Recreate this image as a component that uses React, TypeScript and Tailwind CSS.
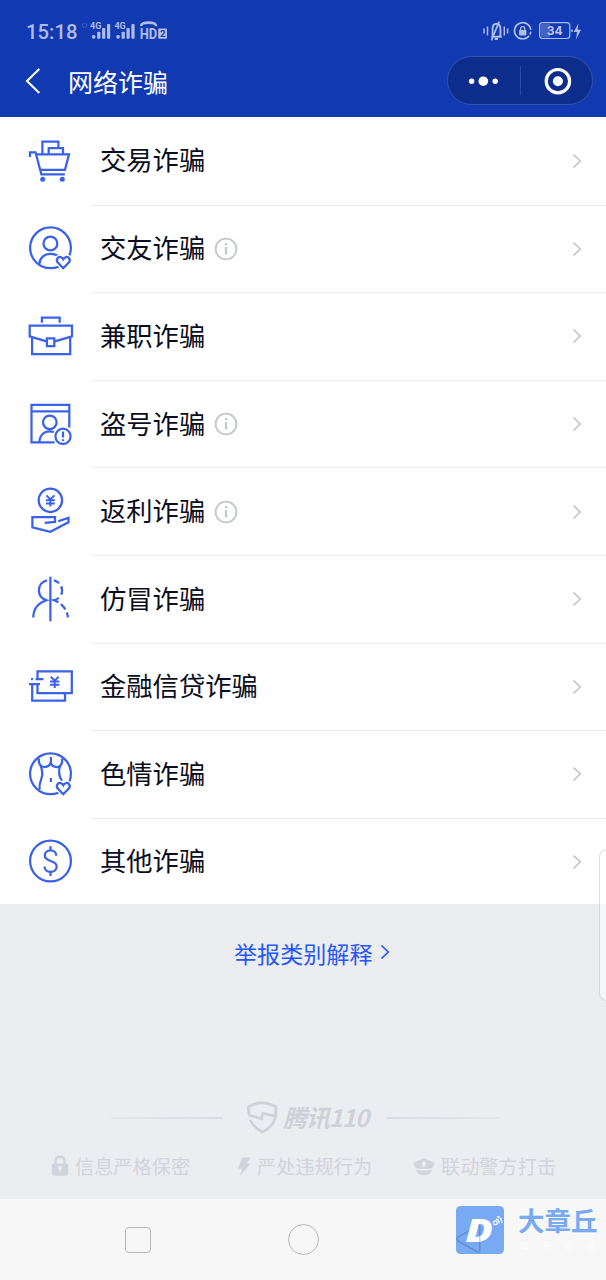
import React from "react";

const HEART =
  "M37.3 44.2l-5.5-5.6a3.6 3.6 0 0 1 0-4.7c1.7-1.6 4.1-1.1 5.5 1.3c1.4-2.4 3.8-2.9 5.5-1.3a3.6 3.6 0 0 1 0 4.7z";

function Heart() {
  return (
    <>
      <path d={HEART} fill="#fff" stroke="#fff" strokeWidth="5" />
      <path d={HEART} />
    </>
  );
}

function CartIcon() {
  return (
    <>
      <path d="M4 20V15.3H9.5L15.4 37.4H38.8" />
      <path d="M10 17.4H43L39 32.8H14.3" />
      <path d="M16.4 17V4.7H32.4V11" />
      <path d="M22.7 17V11.2H37V17" />
      <circle cx="16.7" cy="42.3" r="2.5" fill="#3a62e8" stroke="none" />
      <circle cx="36.3" cy="42.3" r="2.5" fill="#3a62e8" stroke="none" />
    </>
  );
}

function FriendIcon() {
  return (
    <>
      <circle cx="24.5" cy="23.8" r="20.4" />
      <circle cx="24.4" cy="19.5" r="6.9" />
      <path d="M13.3 40.2C13.6 33.6 18.5 29.9 24.4 29.9C27.4 29.9 30 30.5 32.2 32" />
      <Heart />
    </>
  );
}

function BriefcaseIcon() {
  return (
    <>
      <path d="M15.9 10.8V5.6H33.7V10.8" />
      <path d="M20.5 29.3L3.7 24.3V13.5H46V24.3L28.8 29.3" />
      <path d="M6.1 25V42H44.2V25" />
      <path d="M20.9 26.3H28.3V34.2H20.9Z" />
    </>
  );
}

function AccountIcon() {
  return (
    <>
      <path d="M43.3 27.5V4.8H5.5V42.4H28.5" />
      <path d="M5.5 11.4H43.3" />
      <circle cx="23.8" cy="22.3" r="6.8" />
      <path d="M13.4 42C13.7 35.5 17.8 31.4 23.8 31.4C25.4 31.4 26.6 31.6 27.8 32.2" />
      <circle cx="37" cy="36.3" r="7.6" />
      <path d="M37 31.6V37.4M37 39.2V41" />
    </>
  );
}

function RebateIcon() {
  return (
    <>
      <circle cx="24.4" cy="13.3" r="11.7" />
      <path d="M20.4 8.4L24.4 12.4L28.4 8.4M24.4 12.4V19.6M20 13.2H28.8M20 16.4H28.8" strokeWidth="2" />
      <path d="M18.7 35.9L29 34.9V30.2H6.4V40.3L24.3 44.8L42.5 35.2V30.9L32.2 34.3" />
    </>
  );
}

function FakeIcon() {
  return (
    <>
      <path d="M24.4 1.7V46.3" />
      <path d="M21 5.3C16 6.5 12.9 10.5 12.9 15.4C12.9 19.6 15.6 23.6 20.6 25.2C12.5 27.8 7.3 34 7.3 42.5" />
      <path d="M27.8 5.3C30 5.8 31.8 6.9 33.2 8.3M35.2 11.2C36.4 14 36.4 17 35.2 19.6M32.8 22.7C31.3 24.1 29.8 24.9 28.2 25.2C29.5 25.7 31 26.4 32.4 27.3M34.8 29.1C36.7 30.7 38.2 32.4 39.4 34.3M40.8 37.4C41.5 39.2 41.8 40.8 41.8 42.5" />
    </>
  );
}

function LoanIcon() {
  return (
    <>
      <path d="M11.5 17V9.3H45.8V31.2H11.5V22.4" />
      <path d="M6.2 22V38.6H39V31.4" />
      <path d="M3 22H14M9.6 17.1H17.4M5 17.1H7" />
      <path d="M24.8 14.8L28.7 18.7L32.6 14.8M28.7 18.7V26M24 19.5H33.4M24 22.8H33.4" strokeWidth="2" />
    </>
  );
}

function PornIcon() {
  return (
    <>
      <circle cx="24.5" cy="23.8" r="20.4" />
      <path d="M13 8.6C12.2 13.4 14.6 17 18.5 17C21.5 17 24 15.2 24.6 12.3C25.3 15.2 28 17 30.8 17C34.6 17 36.8 13.4 36 8.6" />
      <path d="M24.9 7V13.4" />
      <path d="M14.5 15.4C16.6 20.5 17.3 24 15.2 29.2C13.7 33 13.2 36 13.5 39.8" />
      <path d="M34.2 15.4C32.2 21 32.4 25.4 36 31" />
      <path d="M24.9 28V32" />
      <Heart />
    </>
  );
}

function OtherIcon() {
  return (
    <>
      <circle cx="24.5" cy="24" r="20.4" />
      <path d="M30.3 18.8C30.3 15.6 27.8 13.4 24.5 13.4C21.1 13.4 18.8 15.6 18.8 18.5C18.8 25.6 30.7 22.3 30.7 29.6C30.7 32.7 28 34.9 24.5 34.9C21 34.9 18.5 32.7 18.5 29.4" />
      <path d="M24.5 9.3V13.4M24.5 34.9V39" />
    </>
  );
}

const items = [
  { label: "交易诈骗", Icon: CartIcon },
  { label: "交友诈骗", Icon: FriendIcon, info: true },
  { label: "兼职诈骗", Icon: BriefcaseIcon },
  { label: "盗号诈骗", Icon: AccountIcon, info: true },
  { label: "返利诈骗", Icon: RebateIcon, info: true },
  { label: "仿冒诈骗", Icon: FakeIcon },
  { label: "金融信贷诈骗", Icon: LoanIcon },
  { label: "色情诈骗", Icon: PornIcon },
  { label: "其他诈骗", Icon: OtherIcon },
];

function SignalIcons() {
  return (
    <svg width="90" height="26" viewBox="0 0 90 26" fill="#b0bde8" className="shrink-0">
      <path d="M3.6 5L2.2 7.3L3.6 9.6M5.6 5L7 7.3L5.6 9.6" fill="none" stroke="#4c69c6" />
      {[0, 24.4].map((dx) => (
        <g key={dx} transform={`translate(${dx} 0)`}>
          <text x="10" y="11.2" className="font-['Roboto'] text-[9px] font-bold">
            4G
          </text>
          <rect x="12" y="16.9" width="3.3" height="3.8" rx="1.4" />
          <rect x="17.2" y="13.8" width="3.2" height="6.9" rx="0.8" />
          <rect x="22.1" y="10" width="3.2" height="10.7" rx="0.8" />
          <rect x="27" y="6" width="3.2" height="14.7" rx="0.8" />
        </g>
      ))}
      <path d="M61.3 8.2C61 5.6 64 4.6 68.6 4.6S76.2 5.6 75.9 8.2" fill="none" stroke="#b0bde8" strokeWidth="2.6" />
      <text x="59.7" y="20.8" textLength="17.5" lengthAdjust="spacingAndGlyphs" className="font-['Roboto'] text-[14.5px] font-bold">
        HD
      </text>
      <rect x="78.2" y="10.6" width="8.8" height="10.2" rx="1" />
      <text x="80" y="19.2" fill="#1139b2" className="font-['Roboto'] text-[9.5px] font-bold">
        2
      </text>
    </svg>
  );
}

function BatteryIcons() {
  return (
    <svg width="106" height="28" viewBox="0 0 106 28" fill="none" stroke="#b0bde8" className="shrink-0">
      <path d="M4 10.6V15.4M7.5 8.6V17.4M24.3 8.6V17.4M27.6 10.6V15.4" strokeWidth="1.5" />
      <path d="M11.2 18.8H21.8M12.6 18.2V11C12.6 7.6 14 5.7 16.4 5.7S20.4 7.6 20.4 11V18.2M14.6 21H18" strokeWidth="1.9" />
      <path d="M11.4 22.4L19.2 3.6" strokeWidth="1.7" />
      <path d="M49.2 17.8A8.2 8.2 0 1 1 50.8 11.8" strokeWidth="1.6" />
      <path d="M50.9 13.8L50 16.4" strokeWidth="1.6" />
      <rect x="39" y="12" width="7.4" height="5.4" rx="0.8" fill="#b0bde8" stroke="none" />
      <path d="M40.6 12V10.8A2.1 2.1 0 0 1 44.8 10.8V12" strokeWidth="1.3" />
      <rect x="59.6" y="4.7" width="30.2" height="15.8" rx="3" strokeWidth="1.2" />
      <path d="M62.5 5.8H70V19.4H62.5A2 2 0 0 1 60.4 17.4V7.8A2 2 0 0 1 62.5 5.8Z" fill="#4562c3" stroke="none" />
      <text x="74.6" y="17.1" textAnchor="middle" fill="#b9c5ec" stroke="none" className="font-['Inter'] text-[12px] font-bold">
        34
      </text>
      <path d="M92 11.4V14" strokeWidth="1.4" />
      <path d="M98.4 5.2L93.8 14H97L96 21.4L101 11.8H97.6Z" fill="#b0bde8" stroke="none" />
    </svg>
  );
}

function Chevron({ className }: { className: string }) {
  return (
    <svg width="10" height="16" viewBox="0 0 10 16" fill="none" stroke="currentColor" strokeWidth="1.7" className={className}>
      <path d="M1.5 1.5L8.2 8L1.5 14.5" />
    </svg>
  );
}

function Header() {
  return (
    <header className="h-[117px] shrink-0 bg-[#1139b2]">
      <div className="flex h-14 items-start pl-[26px] pr-5 pt-[18px]">
        <span className="w-[54px] font-['Roboto'] text-[20.3px] font-medium leading-[28px] text-[#b0bde8]">15:18</span>
        <SignalIcons />
        <div className="ml-auto">
          <BatteryIcons />
        </div>
      </div>
      <div className="flex h-[49px] items-center pl-[25px] pr-[13px]">
        <svg width="16" height="28" viewBox="0 0 16 28" fill="none" stroke="#fff" strokeWidth="2.1">
          <path d="M14.3 1.9L2 14L14.3 26.1" />
        </svg>
        <h1 className="ml-[27px] text-[25px] leading-[36px] text-white">网络诈骗</h1>
        <div className="ml-auto flex h-[49px] w-[146px] items-center rounded-full border border-[#3653ab] bg-[#0d2d8d]">
          <svg width="72" height="30" viewBox="0 0 72 30" fill="#fff">
            <circle cx="23.6" cy="15.2" r="2.7" />
            <circle cx="35.3" cy="15.2" r="4.8" />
            <circle cx="47.2" cy="15.2" r="2.7" />
          </svg>
          <div className="h-[29px] w-px bg-[#2c489f]" />
          <svg width="71" height="30" viewBox="0 0 71 30">
            <circle cx="36.9" cy="15.2" r="11.7" fill="none" stroke="#fff" strokeWidth="3.2" />
            <circle cx="36.9" cy="15.2" r="5" fill="#fff" />
          </svg>
        </div>
      </div>
    </header>
  );
}

function Footer() {
  return (
    <footer className="text-[#d2d3dc]">
      <div className="flex h-[34px] items-center pl-[111px]">
        <div className="h-[2px] w-28 bg-linear-to-r from-[#e5e6ea] to-[#dadbe1]" />
        <svg width="34" height="34" viewBox="0 0 34 34" fill="none" stroke="#cfd0d8" strokeWidth="2.7" className="mb-[2px] ml-[22px]">
          <path d="M30.8 16.2V6.7C22 1.6 11.4 1.6 3.5 6.7C3.3 9.8 3.6 12.6 4.4 15.3L16.6 18.7L17.8 13.4L30.4 16.2C29.2 23.5 24.2 28.8 17.3 31.9C11.5 29 7.3 24.8 5.2 20" />
        </svg>
        <span className="ml-[4px] w-[86px] whitespace-nowrap pb-[3px] text-[24px] font-bold italic leading-[34px] tracking-[-1.1px] text-[#cfd0d8]">腾讯110</span>
        <div className="ml-[18px] h-[2px] w-28 bg-linear-to-r from-[#dadbe1] to-[#e5e6ea]" />
      </div>
      <div className="mt-[18px] flex h-[28px] items-center pl-[51px] text-[19.2px] leading-[28px]">
        <svg width="18" height="22" viewBox="0 0 18 22" className="mb-[2px] mr-[6px]">
          <path d="M4.4 9V6.2A4.6 4.6 0 0 1 13.6 6.2V9" fill="none" stroke="currentColor" strokeWidth="2.6" />
          <rect x="0.8" y="8.4" width="16.4" height="12.4" rx="2.4" fill="currentColor" />
          <circle cx="9" cy="13" r="1.9" fill="#ecedf1" />
          <path d="M8.2 13H9.8V17H8.2Z" fill="#ecedf1" />
        </svg>
        <span className="w-[116px] whitespace-nowrap pb-[2px]">信息严格保密</span>
        <svg width="15" height="20" viewBox="0 0 15 20" fill="currentColor" className="ml-[46px] mr-[5px]">
          <path d="M5 0.5H14L9.8 6.6H13.6L2.6 19.6L5.4 11.4H1Z" />
        </svg>
        <span className="w-[116px] whitespace-nowrap pb-[2px]">严处违规行为</span>
        <svg width="22" height="20" viewBox="0 0 22 20" fill="currentColor" className="ml-[40px] mr-[6px]">
          <path
            fillRule="evenodd"
            d="M11 1L16.5 3.8L21.4 5.6C21.6 8.2 20 10.2 18.2 11.4C13.6 12 8.4 12 3.8 11.4C2 10.2 0.4 8.2 0.6 5.6L5.5 3.8ZM11 4.6C9.8 4.6 9 5.2 9 6.2C9 8 9.6 9.6 11 10.4C12.4 9.6 13 8 13 6.2C13 5.2 12.2 4.6 11 4.6Z"
          />
          <path d="M2.8 12.8C8 14 14 14 19.2 12.8C17.8 16.4 14.6 18.4 11 18.4S4.2 16.4 2.8 12.8Z" />
        </svg>
        <span className="whitespace-nowrap pb-[2px]">联动警方打击</span>
      </div>
    </footer>
  );
}

function NavBar() {
  return (
    <nav className="relative flex h-[81px] shrink-0 items-center bg-[#f7f7f7]">
      <div className="ml-[125px] size-[26px] rounded-[4px] border-[1.5px] border-[#b8b8b8]" />
      <div className="ml-[137px] size-[31px] rounded-full border-[1.5px] border-[#b8b8b8]" />

      {/* Watermark */}
      <div className="absolute left-[456px] top-[7px] flex">
        <svg width="48" height="48" viewBox="0 0 48 48">
          <rect width="48" height="48" rx="4.5" fill="#77aaf2" />
          <path d="M2 31.2L21.5 20.2Q23.8 19.2 23.8 21.6V44.6Q23.8 47.2 21.5 46L2 35Q-0.4 33.2 2 31.2Z" fill="none" stroke="#608fd4" strokeWidth="1.5" />
          <text x="9.5" y="36.3" textLength="27.5" lengthAdjust="spacingAndGlyphs" fill="#fff" className="font-['Open_Sans'] text-[31px] font-extrabold italic">
            D
          </text>
          <path d="M23.8 22V38" stroke="#608fd4" strokeWidth="1.2" opacity="0.45" />
          <circle cx="39.4" cy="16.8" r="1.9" fill="none" stroke="#fff" strokeWidth="1.2" />
          <path d="M40 12.9A4 4 0 0 1 43 17.2M41 10.3A6.6 6.6 0 0 1 45.8 17" fill="none" stroke="#fff" strokeWidth="1.2" />
        </svg>
        <div className="ml-[14px] text-[#77aaf2]">
          <div className="whitespace-nowrap text-[26.5px] font-bold leading-[28px]">大章丘</div>
          <div className="ml-[2px] mt-[5px] flex w-[76px] justify-between text-[9px] leading-[14px] text-[#fdfdfd]">
            <span>每</span>
            <span>天</span>
            <span>必</span>
            <span>看</span>
          </div>
        </div>
      </div>
    </nav>
  );
}

export default function App() {
  return (
    <div className="relative flex h-[1280px] w-[606px] flex-col overflow-hidden bg-[#ecedf1] font-['Noto_Sans_CJK_SC',sans-serif]">
      <Header />

      <ul className="shrink-0 bg-white">
        {items.map(({ label, Icon, info }, i) => (
          <li key={label} className="flex h-[87.6px] pl-[26px] last:h-[86.7px]">
            <svg width="48" height="48" viewBox="0 0 48 48" fill="none" stroke="#3a62e8" strokeWidth="2.25" className="shrink-0 self-center">
              <Icon />
            </svg>
            <div
              className={
                i > 0
                  ? "ml-[18px] flex flex-1 items-center border-t border-[#ebebee] pl-2 pr-6"
                  : "ml-[18px] flex flex-1 items-center pl-2 pr-6"
              }
            >
              <span className="pb-[3px] text-[26.3px] leading-[38px] text-[#0b0d20]">{label}</span>
              {info && (
                <svg width="24" height="24" viewBox="0 0 24 24" fill="none" stroke="#c6c8d0" strokeWidth="1.9" className="ml-[9px]">
                  <circle cx="12" cy="12" r="10.4" />
                  <path d="M12 10V17.4M12 6V8.2" strokeWidth="2.3" />
                </svg>
              )}
              <Chevron className="ml-auto text-[#c4c4c8]" />
            </div>
          </li>
        ))}
      </ul>

      <a className="mt-[32px] flex h-[34px] items-center pl-[234px] text-[23.1px] leading-[34px] text-[#2457f5]">
        <span className="pb-px">举报类别解释</span>
        <Chevron className="mb-[2px] ml-[7px]" />
      </a>

      <div className="mt-auto pb-[18px]">
        <Footer />
      </div>

      <NavBar />

      {/* Edge panel handle */}
      <div className="absolute left-[599px] top-[849px] h-[152px] w-4 rounded-[8px] border-[1.5px] border-[#8c8c8c]/30 bg-white/50" />
    </div>
  );
}
